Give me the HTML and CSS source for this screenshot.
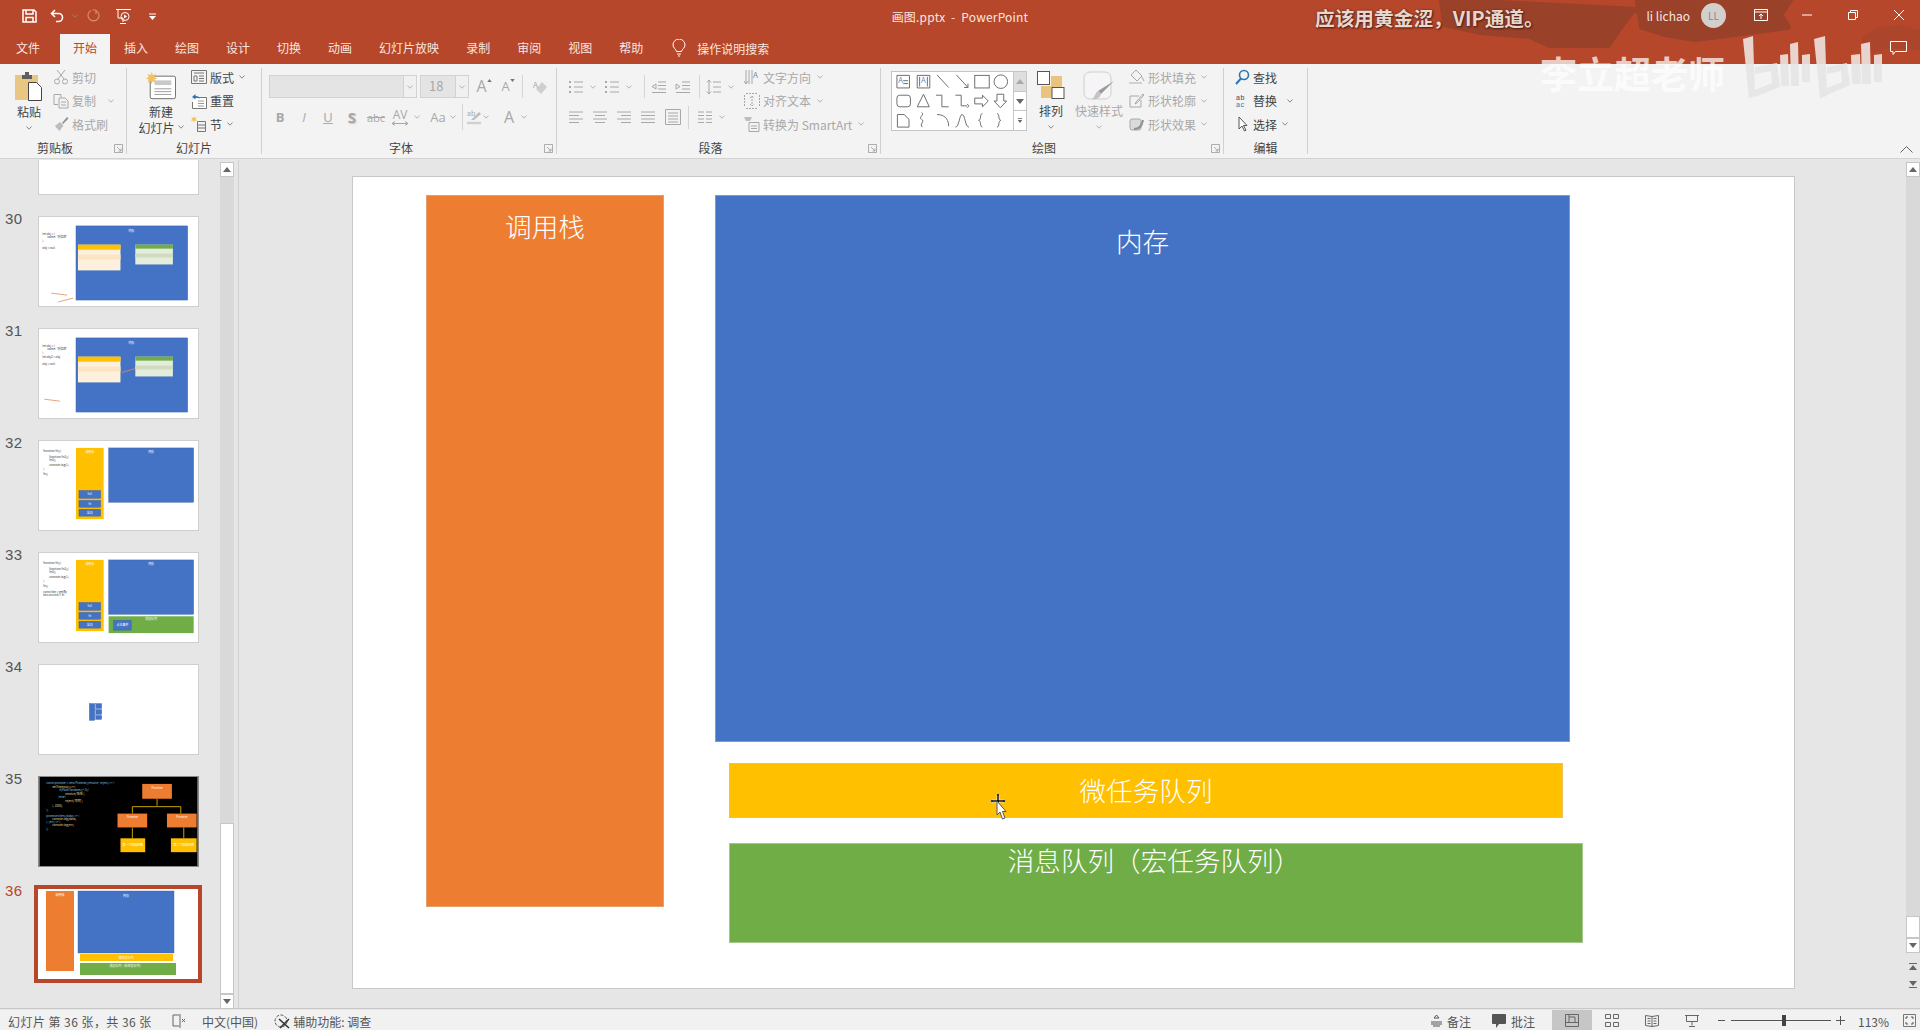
FILE: index.html
```html
<!DOCTYPE html>
<html lang="zh-CN">
  <head>
    <meta charset="UTF-8" />
    <title>画图.pptx - PowerPoint</title>
    <link rel="stylesheet" href="styles.css">
  </head>
  <body>
    <svg class="defs" aria-hidden="true">
      <symbol id="chev" viewBox="0 0 6 4"><path d="M.5.5 3 3.2 5.5.5" fill="none" stroke="currentColor"/></symbol>
      <symbol id="launch" viewBox="0 0 9 9"><path d="M.5 8.5V.5h8v8zM3 3l4 4M7 4.500V7H4.500" fill="none" stroke="currentColor" stroke-width=".8"/></symbol>
      <symbol id="bullets" viewBox="0 0 16 16"><path d="M6 3h9M6 8h9M6 13h9" stroke="currentColor" fill="none"/><path d="M1 2h2v2H1zM1 7h2v2H1zM1 12h2v2H1z" fill="currentColor"/></symbol>
      <symbol id="alignl" viewBox="0 0 16 16"><path d="M1 3h14M1 6.500h10M1 10h14M1 13.500h10" stroke="currentColor" fill="none"/></symbol>
      <symbol id="alignc" viewBox="0 0 16 16"><path d="M1 3h14M3 6.500h10M1 10h14M3 13.500h10" stroke="currentColor" fill="none"/></symbol>
      <symbol id="alignr" viewBox="0 0 16 16"><path d="M1 3h14M5 6.500h10M1 10h14M5 13.500h10" stroke="currentColor" fill="none"/></symbol>
      <symbol id="alignj" viewBox="0 0 16 16"><path d="M1 3h14M1 6.500h14M1 10h14M1 13.500h14" stroke="currentColor" fill="none"/></symbol>
    </svg>

    <!-- stuff burned into the recording, behind the window buttons -->
    <svg class="wm-blob" viewBox="0 0 500 64">
      <g class="wm-blob-dark">
        <path d="M22 0l3 24 35 8 50 4 20 9h58l10-15 15-20 4-0zM218 0l4 27 23 7 30 5 55-7 38-5-8-12 10-15z"/>
      </g>
      <path d="M442 38l14-10 24-3 20 5v20l-30-2-25 7z" class="wm-blob-soft"/>
    </svg>

    <header class="titlebar">
      <div class="qat">
        <svg class="qat-save" viewBox="0 0 15 14"><path d="M1 1h11l2 2v10H1zM4 1v4h7V1M4 13V8.500h7V13" fill="none" stroke="#fff" stroke-width="1.500"/></svg>
        <svg class="qat-undo" viewBox="0 0 15 14"><path d="M5 1 1.500 4.500 5 8M2 4.500h6.500a4 4 0 0 1 0 8H6" fill="none" stroke="#fff" stroke-width="1.600"/></svg>
        <svg class="chev qat-chev"><use href="#chev"/></svg>
        <svg class="qat-redo" viewBox="0 0 13 14"><path d="M4 1.500a5.500 5.500 0 1 0 5 0M9 1v4M9 1H5.500" fill="none" stroke="#d98a72" stroke-width="1.200"/></svg>
        <svg class="qat-show" viewBox="0 0 17 17"><path d="M1 1.500h15M3 1.500v8.500h5M8 10v4M5 15.500h6" fill="none" stroke="#fff"/><circle cx="10" cy="8.500" r="4" fill="none" stroke="#fff"/><path d="M9 6.500l3 2-3 2z" fill="#fff"/></svg>
        <svg class="qat-more" viewBox="0 0 7 7"><path d="M0 1h7" stroke="#fff"/><path d="M0 3h7L3.500 7z" fill="#fff"/></svg>
      </div>
      <div class="doc-title">画图.pptx &nbsp;-&nbsp; PowerPoint</div>
      <div class="win">
        <span class="user">li lichao</span>
        <span class="avatar">LL</span>
        <svg class="win-display" viewBox="0 0 14 12"><path d="M.5.500h13v11H.5zM.5 3h13M7 10V5M5 7l2-2 2 2" fill="none" stroke="#fff"/></svg>
        <svg class="win-min" viewBox="0 0 10 10"><path d="M0 5h10" stroke="#fff"/></svg>
        <svg class="win-max" viewBox="0 0 10 10"><path d="M.5 2.500h7v7h-7zM2.500 2.500v-2h7v7h-2" fill="none" stroke="#fff"/></svg>
        <svg class="win-close" viewBox="0 0 10 10"><path d="M0 0l10 10M10 0 0 10" stroke="#fff"/></svg>
      </div>
    </header>

    <nav class="tabs">
      <span class="tab tab-file">文件</span>
      <span class="tab tab-on">开始</span>
      <span class="tab">插入</span>
      <span class="tab">绘图</span>
      <span class="tab">设计</span>
      <span class="tab">切换</span>
      <span class="tab">动画</span>
      <span class="tab">幻灯片放映</span>
      <span class="tab">录制</span>
      <span class="tab">审阅</span>
      <span class="tab">视图</span>
      <span class="tab">帮助</span>
      <span class="tell">
        <svg class="bulb" viewBox="0 0 14 18"><path d="M4.500 12.500C4 10 1 9 1 6a6 6 0 0 1 12 0c0 3-3 4-3.500 6.500zM5 15h4M6 17h2" fill="none" stroke="#fff"/></svg>
        操作说明搜索
      </span>
      <svg class="comment" viewBox="0 0 17 15"><path d="M.5.500h16v10h-11l-2.500 3v-3H.5z" fill="none" stroke="#fff"/></svg>
    </nav>

    <section class="ribbon">
      <div class="group g-clip">
        <div class="group-body">
          <div class="big big-paste">
            <svg class="big-ic" viewBox="0 0 30 30"><path d="M1 4h23v25H1z" fill="#e9c684"/><path d="M8 4h3V1h4v3h3v4H8z" fill="#5f5f5f"/><path d="M14.500 11.500h8l5 5v13h-13z" fill="#fff" stroke="#444"/></svg>
            <span class="big-text">粘贴</span>
            <svg class="chev"><use href="#chev"/></svg>
          </div>
          <div class="rows off">
            <div class="row"><svg class="ic" viewBox="0 0 16 16"><path d="M4 1l7 9M12 1l-7 9" stroke="currentColor" fill="none"/><circle cx="4" cy="12.500" r="2.500" fill="none" stroke="currentColor"/><circle cx="12" cy="12.500" r="2.500" fill="none" stroke="currentColor"/></svg>剪切</div>
            <div class="row"><svg class="ic" viewBox="0 0 16 16"><path d="M1 1.500h7v3M1 1.500v10h4M6 5h6l3 3v7H6zM8 9h5M8 12h5" fill="none" stroke="currentColor"/></svg>复制<svg class="chev chev-far"><use href="#chev"/></svg></div>
            <div class="row"><svg class="ic" viewBox="0 0 16 16"><path d="M9 7 14 1l1.500 1.500L10 8z" fill="#8f8f8f"/><path d="M2 10l5-4 3.500 3.500-4 5.500C5 13 3 12 2 10z" fill="#bdbdbd"/></svg>格式刷</div>
          </div>
        </div>
        <div class="group-label">剪贴板<svg class="launch"><use href="#launch"/></svg></div>
      </div>

      <div class="group g-slide">
        <div class="group-body">
          <div class="big big-new">
            <svg class="big-ic" viewBox="0 0 32 30"><rect x="4.500" y="4.500" width="27" height="24" rx="2" fill="#fff" stroke="#666"/><path d="M9 9h18v5H9z" fill="#c9c9c9"/><path d="M9 18h18M9 21h18M9 24h18" stroke="#999"/><path d="M6 0l1.500 3.500L11 2 9 5.500l3 1.500-3 1 1.500 3.500L7 10l-1 3-1-3-3.500 1.500L3 8 0 7l3-1.500L1.500 2 5 3.500z" fill="#efc25c"/></svg>
            <span class="big-text">新建</span>
            <span class="big-text">幻灯片<svg class="chev"><use href="#chev"/></svg></span>
          </div>
          <div class="rows">
            <div class="row"><svg class="ic" viewBox="0 0 16 16"><path d="M.5 1.500h15v13H.5zM3 4h10M3 7h3v5H3zM8 7h5M8 9.500h5M8 12h5" fill="none" stroke="#777"/></svg>版式<svg class="chev"><use href="#chev"/></svg></div>
            <div class="row"><svg class="ic" viewBox="0 0 16 16"><path d="M4 4.500h11.500v11H1.500V9" fill="#fff" stroke="#777"/><path d="M7 8h6M7 10.500h6M7 13h6" stroke="#999"/><path d="M1 4 4.500 1v2c3 0 4 1 4 3-1-1-2-1.500-4-1.500v2z" fill="#2e75b6"/></svg>重置</div>
            <div class="row"><svg class="ic" viewBox="0 0 16 16"><path d="M6.500 5.500h8v10h-8zM6.500 9h8M6.500 12h8" fill="none" stroke="#777"/><path d="M3 0l.8 2L6 1.500 4.600 3.200 6 5l-2.200-.500L3 6.500l-.8-2L0 5l1.400-1.800L0 1.500l2.200.500z" fill="#efc25c"/></svg>节<svg class="chev"><use href="#chev"/></svg></div>
          </div>
        </div>
        <div class="group-label">幻灯片</div>
      </div>

      <div class="group g-font">
        <div class="group-body off">
          <div class="tool-row">
            <div class="combo combo-font"><span class="combo-fill"></span><span class="combo-btn"><svg class="chev"><use href="#chev"/></svg></span></div>
            <div class="combo combo-size"><span class="combo-val">18</span><span class="combo-btn"><svg class="chev"><use href="#chev"/></svg></span></div>
            <span class="cell cell-a">A<svg class="mini" viewBox="0 0 6 4"><path d="M3 0l3 4H0z"/></svg></span>
            <span class="cell cell-a2">A<svg class="mini" viewBox="0 0 6 4"><path d="M0 0h6L3 4z"/></svg></span>
            <span class="sep"></span>
            <svg class="ic" viewBox="0 0 16 16"><path d="M10 3l5 5-6 7-5-5z" fill="#cfcfcf"/><text x="1" y="9" class="ic-letter ic-letter-grey">A</text></svg>
          </div>
          <div class="tool-row">
            <span class="cell cell-b">B</span>
            <span class="cell cell-i">I</span>
            <span class="cell cell-u">U</span>
            <span class="cell cell-s">S</span>
            <span class="cell cell-abc">abc</span>
            <span class="cell cell-av"><span class="av-text">AV</span><svg class="av-arrow" viewBox="0 0 16 5"><path d="M0 2.500h16M3 .5 0 2.500l3 2M13 .5l3 2-3 2" fill="none" stroke="currentColor"/></svg></span>
            <svg class="chev"><use href="#chev"/></svg>
            <span class="cell cell-aa">Aa</span>
            <svg class="chev chev-tight"><use href="#chev"/></svg>
            <span class="sep sep-font"></span>
            <svg class="ic" viewBox="0 0 16 16"><path d="M5 11 13 3l2 2-7 6z" fill="#bdbdbd"/><text x="1" y="7" class="ic-hl-text">ab</text><path d="M1 14h14" stroke="#d0d0d0" stroke-width="2.500"/></svg>
            <svg class="chev chev-hl"><use href="#chev"/></svg>
            <span class="cell cell-color">A</span>
            <svg class="chev chev-tight"><use href="#chev"/></svg>
          </div>
        </div>
        <div class="group-label">字体<svg class="launch"><use href="#launch"/></svg></div>
      </div>

      <div class="group g-para">
        <div class="group-body off">
          <div class="para-left">
            <div class="tool-row">
              <svg class="ic"><use href="#bullets"/></svg>
              <svg class="chev chev-para"><use href="#chev"/></svg>
              <svg class="ic"><use href="#bullets"/></svg>
              <svg class="chev chev-para"><use href="#chev"/></svg>
              <span class="sep sep-p1"></span>
              <svg class="ic" viewBox="0 0 16 16"><path d="M7 3h8M7 6.500h8M7 10h8M1 13.500h14M5 5 1 7.500 5 10z" fill="none" stroke="currentColor"/></svg>
              <svg class="ic ic-ind2" viewBox="0 0 16 16"><path d="M7 3h8M7 6.500h8M7 10h8M1 13.500h14M1 5l4 2.500L1 10z" fill="none" stroke="currentColor"/></svg>
              <span class="sep sep-p2"></span>
              <svg class="ic" viewBox="0 0 16 16"><path d="M7 3h8M7 8h8M7 13h8M3 1v14M1 3.500 3 1l2 2.500M1 12.500 3 15l2-2.500" fill="none" stroke="currentColor"/></svg>
              <svg class="chev chev-para"><use href="#chev"/></svg>
            </div>
            <div class="tool-row">
              <svg class="ic"><use href="#alignl"/></svg>
              <svg class="ic ic-al"><use href="#alignc"/></svg>
              <svg class="ic ic-al"><use href="#alignr"/></svg>
              <svg class="ic ic-al"><use href="#alignj"/></svg>
              <svg class="ic ic-dist" viewBox="0 0 16 16"><path d="M.5.500h15v15H.5zM3 4h10M3 7h10M3 10h10M3 13h10" fill="none" stroke="currentColor"/></svg>
              <span class="sep sep-p3"></span>
              <svg class="ic" viewBox="0 0 16 16"><path d="M1 3h6M9 3h6M1 6.500h6M9 6.500h6M1 10h6M9 10h6M1 13.500h6M9 13.500h6" fill="none" stroke="currentColor"/></svg>
              <svg class="chev chev-para"><use href="#chev"/></svg>
            </div>
          </div>
          <div class="rows">
            <div class="row"><svg class="ic" viewBox="0 0 16 16"><path d="M2 1v14M5 1v14M8 1v14M0 12l2 3 2-3" fill="none" stroke="currentColor"/><text x="9" y="9" class="ic-letter">A</text></svg>文字方向<svg class="chev chev-r"><use href="#chev"/></svg></div>
            <div class="row"><svg class="ic" viewBox="0 0 16 16"><path d="M2 .5h12M2 15.500h12M.5 2v12M15.500 2v12M8 3v10M6 5l2-2 2 2M6 11l2 2 2-2" fill="none" stroke="currentColor" stroke-dasharray="2 1"/></svg>对齐文本<svg class="chev chev-r"><use href="#chev"/></svg></div>
            <div class="row"><svg class="ic" viewBox="0 0 16 16"><path d="M0 1h8l-2 4H2z" fill="#bdbdbd"/><path d="M5 6.500h10v9H5zM7 10h6M7 12.500h6" fill="none" stroke="currentColor"/></svg>转换为 SmartArt<svg class="chev chev-r"><use href="#chev"/></svg></div>
          </div>
        </div>
        <div class="group-label">段落<svg class="launch"><use href="#launch"/></svg></div>
      </div>

      <div class="group g-draw">
        <div class="group-body">
          <div class="gallery">
            <svg class="gallery-shapes" viewBox="0 0 122 60">
              <g fill="none" stroke="#6b6b6b">
                <path d="M3.500 3.500h13v13h-13zM10 9h5M10 12h5"/>
                <path d="M24.500 3.500h13v13h-13zM27 5v10M35 5v10"/>
                <path d="M45 3l12 13M65 3l12 13M77 16v-4M77 16h-4"/>
                <rect x="84" y="3.500" width="15" height="13"/>
                <circle cx="111" cy="10" r="7"/>
                <rect x="3.500" y="24" width="14" height="12" rx="3"/>
                <path d="M31 23l6 13H24.500zM44 24h6v12h7M64 24h6v11h6M76 33l2 2-2 2"/>
                <path d="M84 27h8v-3l6 6-6 6v-3h-8zM107 23h7v7h3l-6.500 7-6.500-7h3z"/>
                <path d="M4 44h7l5 5v8H4zM29 42c4 2-4 5 0 7s-3 5 1 8M45 44c6 0 12 3 12 12M64 57c4 0 4-13 7-13s3 13 7 13"/>
                <path d="M92 43c-3 0-1 7-4 7 3 0 1 7 4 7M107 43c3 0 1 7 4 7-3 0-1 7-4 7"/>
              </g>
              <text x="5" y="11" class="ic-letter">A</text>
              <text x="28.500" y="11" class="ic-letter">A</text>
            </svg>
            <div class="gallery-scroll">
              <span class="gs gs-up"><svg class="arrow-ic" viewBox="0 0 8 5"><path d="M4 0l4 5H0z"/></svg></span>
              <span class="gs"><svg class="arrow-ic" viewBox="0 0 8 5"><path d="M0 0h8L4 5z"/></svg></span>
              <span class="gs"><svg class="arrow-ic arrow-more" viewBox="0 0 8 9"><path d="M0 0h8v1.500H0zM0 3.500h8L4 9z"/></svg></span>
            </div>
          </div>
          <div class="big big-arrange">
            <svg class="big-ic" viewBox="0 0 28 28"><rect x="14" y="5" width="11" height="12" fill="#eac47f"/><rect x="4" y="15" width="11" height="12" fill="#eac47f"/><rect x=".5" y=".5" width="12" height="13" fill="#fff" stroke="#555"/><rect x="15" y="16.500" width="12" height="11" fill="#fff" stroke="#555"/></svg>
            <span class="big-text">排列</span>
            <svg class="chev"><use href="#chev"/></svg>
          </div>
          <div class="big big-quick off">
            <svg class="big-ic" viewBox="0 0 32 30"><rect x="1" y="1" width="27" height="27" rx="6" fill="#f6f4f6" stroke="#cfcfcf"/><path d="M31 10 18 23l-3-3z" fill="#9a9a9a"/><path d="M15 20l3 3c-1 4-5 6-9 5 3-2 3-6 6-8z" fill="#c4c4c4"/></svg>
            <span class="big-text">快速样式</span>
            <svg class="chev"><use href="#chev"/></svg>
          </div>
          <div class="rows off">
            <div class="row"><svg class="ic" viewBox="0 0 16 16"><path d="M7 1l6 6-5 5-6-6zM13 8l2 4" fill="none" stroke="currentColor"/><path d="M0 14h13" stroke="#d0d0d0" stroke-width="2"/></svg>形状填充<svg class="chev"><use href="#chev"/></svg></div>
            <div class="row"><svg class="ic" viewBox="0 0 16 16"><path d="M1 3h9M1 3v11h11V7M14 1 7 9l-1 2 2-1 7-8z" fill="none" stroke="currentColor"/></svg>形状轮廓<svg class="chev"><use href="#chev"/></svg></div>
            <div class="row"><svg class="ic" viewBox="0 0 16 16"><rect x="1" y="3" width="11" height="11" rx="2" fill="#dadada" stroke="currentColor"/><path d="M5 13c5 0 8-3 9-9" fill="none" stroke="#8f8f8f" stroke-width="2"/></svg>形状效果<svg class="chev"><use href="#chev"/></svg></div>
          </div>
        </div>
        <div class="group-label">绘图<svg class="launch"><use href="#launch"/></svg></div>
      </div>

      <div class="group g-edit">
        <div class="group-body">
          <div class="rows">
            <div class="row"><svg class="ic" viewBox="0 0 16 16"><circle cx="10" cy="6" r="4.500" fill="none" stroke="#2e75b6" stroke-width="1.600"/><path d="M7 9.500 2 15" stroke="#2e75b6" stroke-width="2"/></svg>查找</div>
            <div class="row"><svg class="ic" viewBox="0 0 16 16"><text x="2" y="6.500" class="ic-ab">ab</text><text x="2" y="14.400" class="ic-ab ic-ac">ac</text></svg>替换<svg class="chev chev-edit"><use href="#chev"/></svg></div>
            <div class="row"><svg class="ic" viewBox="0 0 16 16"><path d="M5 1v12l3-3 2.500 5 1.500-.8L9.500 9.500H13z" fill="#fff" stroke="#555"/></svg>选择<svg class="chev"><use href="#chev"/></svg></div>
          </div>
        </div>
        <div class="group-label">编辑</div>
      </div>

      <svg class="collapse" viewBox="0 0 13 7"><path d="M.5 6.500 6.500.5l6 6" fill="none" stroke="#666"/></svg>
    </section>

    <main class="main">
      <aside class="panel">
        <div class="thumb-list">
          <div class="thumb-row"><span class="num"></span><div class="thumb thumb-cut"></div></div>

          <div class="thumb-row">
            <span class="num">30</span>
            <div class="thumb">
              <svg class="thumb-art" viewBox="0 0 160 90">
                <text x="3" y="18" class="t-code">let obj = {</text><text x="8" y="21" class="t-code">name: '孙悟空'</text><text x="3" y="25" class="t-code">}</text><text x="3" y="32" class="t-code">obj = null</text>
                <rect x="37" y="9" width="113" height="75" class="f-blue"/><text x="93" y="15" class="t-small">内存</text>
                <rect x="39" y="28" width="43" height="26" class="f-cream"/><rect x="39" y="28" width="43" height="5" class="f-yellow"/><rect x="39" y="38" width="43" height="5" class="f-cream2"/>
                <rect x="97" y="28" width="38" height="20" class="f-pale"/><rect x="97" y="28" width="38" height="4" class="f-green"/><rect x="97" y="37" width="38" height="4" class="f-pale2"/>
                <path d="M12 77l16 2M19 86l15-4" class="s-arrow"/>
              </svg>
            </div>
          </div>

          <div class="thumb-row">
            <span class="num">31</span>
            <div class="thumb">
              <svg class="thumb-art" viewBox="0 0 160 90">
                <text x="3" y="18" class="t-code">let obj = {</text><text x="8" y="21" class="t-code">name: '孙悟空'</text><text x="3" y="25" class="t-code">}</text><text x="3" y="29" class="t-code">let obj2 = obj</text><text x="3" y="36" class="t-code">obj = null</text>
                <rect x="37" y="9" width="113" height="75" class="f-blue"/><text x="93" y="15" class="t-small">内存</text>
                <rect x="39" y="28" width="43" height="26" class="f-cream"/><rect x="39" y="28" width="43" height="5" class="f-yellow"/><rect x="39" y="38" width="43" height="5" class="f-cream2"/>
                <rect x="97" y="28" width="38" height="20" class="f-pale"/><rect x="97" y="28" width="38" height="4" class="f-green"/><rect x="97" y="37" width="38" height="4" class="f-pale2"/>
                <path d="M83 44l14-4M5 71l16 2" class="s-arrow"/>
              </svg>
            </div>
          </div>

          <div class="thumb-row">
            <span class="num">32</span>
            <div class="thumb">
              <svg class="thumb-art" viewBox="0 0 160 90">
                <text x="4" y="11" class="t-code">function fn(){</text><text x="10" y="17" class="t-code">function fn2(){</text><text x="10" y="20" class="t-code">fn3()</text><text x="10" y="25" class="t-code">console.log(1)</text><text x="4" y="29" class="t-code">}</text><text x="4" y="34" class="t-code">fn()</text>
                <rect x="37" y="7" width="28" height="72" class="f-yellow"/><text x="51" y="12" class="t-small">调用栈</text>
                <rect x="70" y="7" width="86" height="55" class="f-blue"/><text x="113" y="12" class="t-small">内存</text>
                <rect x="40" y="50" width="22" height="8" class="f-blue"/><rect x="40" y="60" width="22" height="7" class="f-blue"/><rect x="40" y="69" width="22" height="7" class="f-blue"/>
                <text x="51" y="55" class="t-small">fn2</text><text x="51" y="65" class="t-small">fn</text><text x="51" y="74" class="t-small">全局</text>
              </svg>
            </div>
          </div>

          <div class="thumb-row">
            <span class="num">33</span>
            <div class="thumb">
              <svg class="thumb-art" viewBox="0 0 160 90">
                <text x="4" y="11" class="t-code">function fn(){</text><text x="10" y="17" class="t-code">function fn2(){</text><text x="10" y="20" class="t-code">fn3()</text><text x="10" y="25" class="t-code">console.log(1)</text><text x="4" y="29" class="t-code">}</text><text x="4" y="34" class="t-code">fn()</text><text x="4" y="40" class="t-code">const btn = getBy</text><text x="4" y="43" class="t-code">btn.onclick = fn</text>
                <rect x="37" y="7" width="28" height="72" class="f-yellow"/><text x="51" y="12" class="t-small">调用栈</text>
                <rect x="70" y="7" width="86" height="55" class="f-blue"/><text x="113" y="12" class="t-small">内存</text>
                <rect x="40" y="50" width="22" height="8" class="f-blue"/><rect x="40" y="60" width="22" height="7" class="f-blue"/><rect x="40" y="69" width="22" height="7" class="f-blue"/>
                <text x="51" y="55" class="t-small">fn2</text><text x="51" y="65" class="t-small">fn</text><text x="51" y="74" class="t-small">全局</text>
                <rect x="70" y="64" width="86" height="17" class="f-green"/><text x="113" y="68" class="t-small">消息队列</text>
                <rect x="75" y="68" width="18" height="10" class="f-blue"/><text x="84" y="74" class="t-small">点击事件</text>
              </svg>
            </div>
          </div>

          <div class="thumb-row">
            <span class="num">34</span>
            <div class="thumb">
              <svg class="thumb-art" viewBox="0 0 160 90">
                <rect x="50.500" y="39" width="5.500" height="17" class="f-blue"/><rect x="57" y="39" width="6" height="5" class="f-blue"/><rect x="57" y="45" width="6" height="5" class="f-blue"/><rect x="57" y="51" width="6" height="4" class="f-blue"/>
              </svg>
            </div>
          </div>

          <div class="thumb-row">
            <span class="num">35</span>
            <div class="thumb thumb-dark">
              <svg class="thumb-art" viewBox="0 0 160 90">
                <rect width="160" height="90" fill="#000"/>
                <text x="7" y="7" class="t-dark">const promise = new Promise((resolve, reject) =&gt; {</text>
                <text x="13" y="11" class="t-dark2">setTimeout(()=&gt;{</text><text x="20" y="14" class="t-dark">if(Math.random()&gt;.5){</text><text x="26" y="18" class="t-dark2">resolve('哈哈')</text><text x="19" y="21" class="t-dark">}else{</text><text x="26" y="25" class="t-dark2">reject('呵呵')</text><text x="13" y="30" class="t-dark2">}, 1000)</text><text x="7" y="34" class="t-dark">})</text>
                <text x="7" y="40" class="t-dark">promise.then((data) =&gt; {</text><text x="13" y="43" class="t-dark2">console.log(data)</text><text x="7" y="47" class="t-dark">}, (err) =&gt; {</text><text x="13" y="50" class="t-dark2">console.log(err)</text><text x="7" y="54" class="t-dark">})</text>
                <path d="M119 22v7M94 37v-7h49v7M94 51v11M146 51v11" class="s-tree"/>
                <rect x="104" y="7" width="30" height="15" class="f-orange"/><rect x="79" y="37" width="30" height="14" class="f-orange"/><rect x="129" y="37" width="30" height="14" class="f-orange"/>
                <rect x="82" y="62" width="25" height="14" class="f-yellow"/><rect x="133" y="62" width="26" height="14" class="f-yellow"/>
                <text x="119" y="12" class="t-small">Promise</text><text x="94" y="41" class="t-small">Promise</text><text x="144" y="41" class="t-small">Promise</text>
                <text x="94.500" y="70" class="t-small">第一个回调函数</text><text x="146" y="70" class="t-small">第二个回调函数</text>
              </svg>
            </div>
          </div>

          <div class="thumb-row">
            <span class="num num-on">36</span>
            <div class="thumb thumb-on">
              <svg class="thumb-art" viewBox="0 0 160 90">
                <rect x="8" y="2" width="28" height="80" class="f-orange"/><text x="22" y="7" class="t-small">调用栈</text>
                <rect x="40" y="2" width="96" height="62" class="f-blue"/><text x="88" y="8" class="t-small">内存</text>
                <rect x="42" y="65" width="93" height="7" class="f-yellow"/><text x="88" y="70" class="t-small">微任务队列</text>
                <rect x="42" y="74" width="96" height="12" class="f-green"/><text x="88" y="78" class="t-small">消息队列（宏任务队列）</text>
              </svg>
            </div>
          </div>
        </div>

        <div class="vbar vbar-left">
          <span class="vbtn"><svg class="arrow-ic" viewBox="0 0 8 5"><path d="M4 0l4 5H0z"/></svg></span>
          <span class="vtrack vtrack-left"></span>
          <span class="vthumb vthumb-left"></span>
          <span class="vbtn"><svg class="arrow-ic" viewBox="0 0 8 5"><path d="M0 0h8L4 5z"/></svg></span>
        </div>
      </aside>

      <div class="stage">
        <div class="slide">
          <div class="shape shape-stack">调用栈</div>
          <div class="shape shape-heap">内存</div>
          <div class="shape shape-micro">微任务队列</div>
          <div class="shape shape-macro">消息队列（宏任务队列）</div>
          <svg class="pointer" viewBox="0 0 17 28">
            <path d="M8 1l2 2.500H9V8h4.500V7L16 9l-2.500 2v-1H9v4.500h1L8 17l-2-2.500h1V10H2.500v1L0 9l2.500-2v1H7V3.500H6z" fill="#111" stroke="#fff" stroke-width=".5"/>
            <path d="M7 9v14l3-3 2.500 7 2.500-1-2.500-6.500H16z" fill="#fff" stroke="#555"/>
          </svg>
        </div>
        <div class="vbar vbar-right">
          <span class="vbtn"><svg class="arrow-ic" viewBox="0 0 8 5"><path d="M4 0l4 5H0z"/></svg></span>
          <span class="vtrack vtrack-right"></span>
          <span class="vthumb vthumb-right"></span>
          <span class="vbtn"><svg class="arrow-ic" viewBox="0 0 8 5"><path d="M0 0h8L4 5z"/></svg></span>
          <svg class="page-ic page-prev" viewBox="0 0 8 9"><path d="M0 1h8v1H0zM4 3l4 5H0z"/></svg>
          <svg class="page-ic page-next" viewBox="0 0 8 9"><path d="M0 8h8V7H0zM4 6 8 1H0z"/></svg>
        </div>
      </div>
    </main>

    <footer class="statusbar">
      <div class="st-left">
        <span class="st-count">幻灯片 第 36 张，共 36 张</span>
        <svg class="st-spell" viewBox="0 0 14 14"><path d="M7 1H1v11h6M8 0v14M10 5l3 3M13 5l-3 3" fill="none" stroke="#666"/></svg>
        <span class="st-lang">中文(中国)</span>
        <svg class="st-a11y" viewBox="0 0 16 15"><circle cx="7" cy="7" r="6" fill="none" stroke="#555" stroke-dasharray="3 1.500"/><path d="M5 5l10 9M15 5 6 14" stroke="#333" stroke-width="1.600"/></svg>
        <span>辅助功能: 调查</span>
      </div>
      <div class="st-right">
        <svg class="st-notes" viewBox="0 0 11 12"><path d="M0 7h11M0 9h11M2 11h7M5.500 0 3 3h5z" stroke="#555" fill="none"/></svg>
        <span class="st-label">备注</span>
        <svg class="st-comment" viewBox="0 0 14 14"><path d="M1 0h12a1 1 0 0 1 1 1v8a1 1 0 0 1-1 1H7l-3 4v-4H1a1 1 0 0 1-1-1V1a1 1 0 0 1 1-1z" fill="#555"/></svg>
        <span class="st-label st-label-last">批注</span>
        <span class="view view-on"><svg class="view-ic" viewBox="0 0 14 13"><path d="M.5.500h13v12H.5zM4 .5v8M4 3h6v5.500M.5 8.500h13" fill="none" stroke="#666"/></svg></span>
        <span class="view"><svg class="view-ic" viewBox="0 0 14 13"><path d="M.5.500h5v4h-5zM8.500.5h5v4h-5zM.5 8.500h5v4h-5zM8.500 8.500h5v4h-5z" fill="none" stroke="#666"/></svg></span>
        <span class="view"><svg class="view-ic" viewBox="0 0 14 13"><path d="M.5 1.500 7 2.500l6.500-1v10L7 12.500l-6.500-1zM7 2.500v10M2.500 4.500h3M2.500 7h3M2.500 9.500h3M8.500 4.500h3M8.500 7h3M8.500 9.500h3" fill="none" stroke="#666"/></svg></span>
        <span class="view"><svg class="view-ic" viewBox="0 0 14 13"><path d="M0 1.500h14M1.500 1.500v6h11v-6M7 7.500v4M4 12.500h6" fill="none" stroke="#666"/></svg></span>
        <span class="zoom-minus"></span>
        <span class="slider"><span class="slider-knob"></span></span>
        <svg class="zoom-plus" viewBox="0 0 9 9"><path d="M4.500 0v9M0 4.500h9" stroke="#555"/></svg>
        <span class="st-zoom">113%</span>
        <svg class="st-fit" viewBox="0 0 13 13"><path d="M.5.500h12v12H.5z" fill="none" stroke="#777"/><path d="M3 5V3h2M10 5V3H8M3 8v2h2M10 8v2H8" fill="none" stroke="#555"/></svg>
      </div>
    </footer>

    <div class="wm-line">应该用黄金涩，VIP通道。</div>
    <div class="wm-name">李立超老师</div>
    <svg class="wm-logo" viewBox="0 0 140 62">
      <defs>
        <linearGradient id="wm-fade" gradientUnits="userSpaceOnUse" x1="0" y1="0" x2="0" y2="62">
          <stop offset=".45" stop-color="#f2ecea" stop-opacity=".85"/>
          <stop offset=".45" stop-color="#dcdcdc" stop-opacity=".55"/>
        </linearGradient>
      </defs>
      <g fill="url(#wm-fade)">
        <path d="M0 3l10-3 2 60-6 2z"/>
        <path d="M12 31l22-4 3 24-25 10v-7l17-7-1-12-16 3z"/>
        <path d="M37 19l8-1 1 32h-8zM47 8l8-2 1 44h-8zM59 19l8-1v28h-8z"/>
        <path d="M71 3l11-3 2 60-7 2z"/>
        <path d="M84 31l20-4 3 22-23 10v-7l15-6-1-11-14 3z"/>
        <path d="M108 19l9-1 1 30h-9zM118 8l9-2 1 42h-9zM131 19l8-1v28h-8z"/>
      </g>
    </svg>
  </body>
</html>
```

FILE: styles.css
```css
* {
  box-sizing: border-box;
}
html,
body {
  margin: 0;
  height: 100%;
}
body {
  position: relative;
  height: 1030px;
  overflow: hidden;
  background: #e6e6e6;
  font-family: "Noto Sans CJK SC", "Noto Sans", sans-serif;
  font-size: 12px;
  color: #444;
}
svg {
  flex: none;
  display: block;
}
.defs {
  width: 0;
  height: 0;
  position: absolute;
}

/* title bar */
.titlebar {
  height: 34px;
  background: #b7472a;
  color: #f7e6e0;
  display: grid;
  grid-template-columns: 1fr auto 1fr;
  align-items: center;
}
.qat {
  display: flex;
  align-items: center;
  padding: 0 0 2px 22px;
  position: relative;
  z-index: 2;
}
.qat-save {
  width: 15px;
  height: 14px;
}
.qat-undo {
  width: 15px;
  height: 14px;
  margin-left: 13px;
}
.qat-chev {
  margin-left: 7px;
  color: #f3d5cb;
}
.qat-redo {
  width: 13px;
  height: 14px;
  margin-left: 9px;
}
.qat-show {
  width: 17px;
  height: 17px;
  margin-left: 15px;
}
.qat-more {
  width: 7px;
  height: 7px;
  margin-left: 17px;
}
.doc-title {
  line-height: 34px;
  font-size: 12px;
  letter-spacing: .2px;
  position: relative;
  z-index: 2;
}
.win {
  display: flex;
  align-items: center;
  justify-content: flex-end;
  padding-bottom: 4px;
  position: relative;
  z-index: 2;
}
.user {
  margin-right: 11px;
}
.avatar {
  width: 25px;
  height: 25px;
  border-radius: 50%;
  background: #d3cfcd;
  color: #8a8a8a;
  font-size: 10px;
  line-height: 25px;
  text-align: center;
}
.win-display {
  width: 14px;
  height: 12px;
  margin-left: 28px;
}
.win-min {
  width: 10px;
  height: 10px;
  margin-left: 34px;
}
.win-max {
  width: 10px;
  height: 10px;
  margin-left: 36px;
}
.win-close {
  width: 10px;
  height: 10px;
  margin: 0 16px 0 36px;
}

/* tabs */
.tabs {
  height: 30px;
  background: #b7472a;
  color: #f7e6e0;
  display: flex;
  align-items: stretch;
  padding-left: 3px;
  position: relative;
}
.tab {
  padding: 0 13px;
  margin-right: 1px;
  line-height: 28px;
}
.tab-file {
  margin-right: 7px;
}
.tab-on {
  background: #f3f3f3;
  color: #b7472a;
}
.tell {
  display: flex;
  align-items: center;
  gap: 11px;
  margin-left: 15px;
  margin-top: -2px;
}
.bulb {
  width: 14px;
  height: 18px;
}
.comment {
  width: 17px;
  height: 15px;
  margin: 7px 13px 0 auto;
  position: relative;
  z-index: 2;
}

/* ribbon */
.ribbon {
  height: 95px;
  background: #f3f3f3;
  border-bottom: 1px solid #d2d2d2;
  display: flex;
  padding-top: 4px;
  color: #444;
}
.group {
  height: 86px;
  border-right: 1px solid #d0d0d0;
  display: flex;
  flex-direction: column;
  flex: none;
}
.g-clip {
  width: 127px;
}
.g-slide {
  width: 135px;
}
.g-font {
  width: 295px;
}
.g-para {
  width: 324px;
}
.g-draw {
  width: 343px;
}
.g-edit {
  width: 84px;
}
.group-body {
  height: 70px;
  display: flex;
}
.group-label {
  height: 16px;
  line-height: 20px;
  text-align: center;
  position: relative;
  color: #444;
  padding-right: 16px;
}
.g-slide .group-label,
.g-edit .group-label {
  padding-right: 0;
}
.launch {
  position: absolute;
  right: 3px;
  top: 6px;
  width: 9px;
  height: 9px;
  color: #9a9a9a;
}
.off {
  color: #a8a8a8;
}
.big {
  display: flex;
  flex-direction: column;
  align-items: center;
  padding-top: 3px;
  line-height: 15.500px;
}
.big-ic {
  width: 30px;
  height: 30px;
  margin-bottom: 3px;
}
.big .chev {
  margin-top: 6px;
}
.big-text {
  display: flex;
  align-items: center;
  white-space: nowrap;
  gap: 3px;
}
.big-text .chev {
  margin-top: 0;
}
.big-paste {
  width: 40px;
  margin: 0 4px 0 9px;
}
.big-new {
  width: 56px;
  margin: 0 2px 0 6px;
}
.rows {
  display: flex;
  flex-direction: column;
  gap: 3.500px;
  margin-top: -1px;
}
.row {
  height: 20px;
  display: flex;
  align-items: center;
  white-space: nowrap;
  gap: 3px;
}
.ic {
  width: 16px;
  height: 16px;
}
.chev {
  width: 6px;
  height: 4px;
  color: #888;
}
.off .chev {
  color: #b5b5b5;
}
.row .chev {
  margin-left: 2px;
}
.row .chev-far {
  margin-left: 9px;
}
.row .chev-r {
  margin-left: 3px;
}
.row .chev-edit {
  margin-left: 7px;
}
.ic-letter {
  font-size: 8px;
  fill: #5b8bc4;
}
.ic-letter-grey {
  fill: #a8a8a8;
}
.ic-hl-text {
  font-size: 7px;
  fill: #a8a8a8;
}
.ic-ab {
  font-family: "Liberation Sans", sans-serif;
  font-size: 7px;
  letter-spacing: .5px;
  fill: #444;
}
.ic-ac {
  fill: #2e75b6;
}

/* font and paragraph tools */
.g-font .group-body {
  flex-direction: column;
  padding: 7px 0 0 6px;
  gap: 7.500px;
}
.tool-row {
  height: 23px;
  display: flex;
  align-items: center;
}
.combo {
  height: 23px;
  display: flex;
  border: 1px solid #d2d2d2;
  background: #e4e4e4;
}
.combo-font {
  width: 148px;
  margin-left: 1px;
}
.combo-size {
  width: 49px;
  margin: 0 3px;
}
.combo-fill {
  flex: 1;
}
.combo-val {
  flex: 1;
  padding-left: 8px;
  line-height: 20px;
  font-size: 13px;
}
.combo-btn {
  width: 13px;
  background: #f0f0f0;
  border-left: 1px solid #d2d2d2;
  display: flex;
  align-items: center;
  justify-content: center;
}
.cell {
  width: 24px;
  flex: none;
  display: flex;
  justify-content: center;
  font-family: "Open Sans", sans-serif;
  font-size: 13px;
  line-height: 23px;
}
.cell-a {
  font-size: 16px;
}
.cell-a2 {
  font-size: 13px;
}
.mini {
  width: 5px;
  height: 3px;
  margin-top: 4px;
  fill: #777;
}
.cell-b {
  font-weight: 700;
}
.cell-i {
  font-style: italic;
}
.cell-u {
  text-decoration: underline;
}
.cell-s {
  font-weight: 700;
  font-size: 15px;
  text-shadow: 1px 1px 1px #c8c8c8;
}
.cell-abc {
  text-decoration: line-through;
  font-size: 11px;
}
.cell-av {
  flex-direction: column;
  align-items: center;
  font-size: 12px;
}
.av-text {
  line-height: 13px;
}
.av-arrow {
  width: 16px;
  height: 5px;
}
.cell-color {
  margin-left: 4px;
  font-size: 16px;
}
.g-font .cell-aa {
  margin-left: 4px;
}
.g-font .tool-row .chev {
  margin: 0 2px;
}
.g-font .tool-row .chev-tight {
  margin: 0 2px 0 0;
}
.g-font .tool-row .chev-hl {
  margin: 0 4px 0 1px;
}
.g-font .combo .chev {
  margin: 0;
}
.sep {
  width: 1px;
  height: 23px;
  background: #d6d6d6;
  flex: none;
  margin: 0 9px 0 2px;
}
.sep-font {
  margin: 0 3px 0 4px;
  height: 26px;
}
.g-para .group-body {
  padding-left: 11px;
}
.para-left {
  width: 176px;
  padding-top: 7px;
  display: flex;
  flex-direction: column;
  gap: 7.500px;
}
.chev-para {
  margin: 0 8px 0 6px;
}
.sep-p1 {
  margin: 0 6px 0 4px;
}
.ic-ind2 {
  margin-left: 8px;
}
.sep-p2 {
  margin: 0 6px 0 8px;
}
.ic-al {
  margin-left: 8px;
}
.ic-dist {
  margin-left: 9px;
}
.sep-p3 {
  margin: 0 8px 0 7px;
}

/* shapes gallery */
.g-draw .group-body {
  padding: 3px 0 0 10px;
}
.g-draw .rows {
  margin-top: -4px;
}
.gallery {
  width: 136px;
  height: 60px;
  display: flex;
  background: #fff;
  border: 1px solid #c6c6c6;
  margin-right: 4px;
}
.gallery-shapes {
  width: 121px;
  height: 58px;
}
.gallery-scroll {
  flex: 1;
  display: flex;
  flex-direction: column;
  border-left: 1px solid #c6c6c6;
}
.gs {
  flex: 1;
  display: flex;
  align-items: center;
  justify-content: center;
  border-bottom: 1px solid #c6c6c6;
}
.gs:last-child {
  border-bottom: 0;
}
.gs-up {
  background: #dedede;
}
.gs-up .arrow-ic {
  fill: #aaa;
}
.arrow-more {
  height: 9px;
}
.g-draw .big {
  padding-top: 0;
}
.big-arrange {
  width: 40px;
  margin-right: 2px;
}
.big-arrange .big-ic {
  width: 28px;
  height: 28px;
  margin-bottom: 4px;
}
.big-quick {
  width: 52px;
  margin-right: 4px;
}
.big-quick .big-ic {
  width: 32px;
  margin-bottom: 2px;
}
.g-edit .group-body {
  padding-left: 10px;
}
.collapse {
  width: 13px;
  height: 7px;
  margin: 78px 7px 0 auto;
}

/* main area */
.main {
  display: flex;
  height: 849px;
  margin-top: 1px;
  border-bottom: 1px solid #c8c8c8;
}
.panel {
  width: 239px;
  flex: none;
  display: flex;
  border-right: 1px solid #cfcfcf;
  padding-right: 4px;
}
.thumb-list {
  width: 220px;
  display: flex;
  flex-direction: column;
  gap: 21px;
  overflow: hidden;
  padding-top: 0;
}
.thumb-row {
  display: flex;
  flex: none;
}
.num {
  width: 38px;
  padding: 0 0 0 5px;
  font-family: "Liberation Sans", sans-serif;
  font-size: 15px;
  line-height: 18px;
  color: #555;
  margin-top: -6px;
  letter-spacing: .5px;
}
.num-on {
  color: #b7472a;
  margin-top: -6px;
}
.thumb {
  width: 161px;
  height: 91px;
  background: #fff;
  border: 1px solid #cfcfcf;
}
.thumb-cut {
  height: 35px;
  border-top: 0;
}
.thumb-dark {
  border-color: #8a8a8a;
}
.thumb-on {
  outline: 4px solid #b7472a;
  border: 0;
  width: 160px;
  height: 90px;
  margin-top: 1px;
}
.thumb-art {
  width: 100%;
  height: 100%;
}
.f-blue {
  fill: #4472c4;
  stroke: #3a62aa;
  stroke-width: .4;
}
.f-yellow {
  fill: #ffc000;
}
.f-orange {
  fill: #ed7d31;
}
.f-green {
  fill: #70ad47;
}
.f-cream {
  fill: #fdf0dc;
}
.f-cream2 {
  fill: #fbe3c4;
}
.f-pale {
  fill: #e4ecdc;
}
.f-pale2 {
  fill: #cfdcc0;
}
.t-code {
  font-size: 3px;
  fill: #333;
}
.t-small {
  font-size: 3px;
  fill: #fff;
  text-anchor: middle;
}
.t-dark {
  font-size: 3px;
  fill: #7fc4ef;
}
.t-dark2 {
  font-size: 3px;
  fill: #e7dd9a;
}
.s-arrow {
  stroke: #e28a5a;
  stroke-width: .8;
  fill: none;
}
.s-tree {
  stroke: #c9a100;
  stroke-width: 1;
  fill: none;
}

/* scrollbars */
.vbar {
  width: 14px;
  flex: none;
  display: flex;
  flex-direction: column;
  padding-top: 2px;
}
.vbtn {
  height: 15px;
  flex: none;
  background: #fff;
  border: 1px solid #c6c6c6;
  display: flex;
  align-items: center;
  justify-content: center;
}
.arrow-ic {
  width: 8px;
  height: 5px;
  fill: #666;
}
.vtrack {
  background: #d9d9d9;
  flex: none;
}
.vthumb {
  background: #fff;
  border: 1px solid #c6c6c6;
  flex: none;
}
.vtrack-left {
  height: 646px;
}
.vthumb-left {
  height: 171px;
}
.vtrack-right {
  height: 739px;
}
.vthumb-right {
  height: 22px;
}
.page-ic {
  width: 8px;
  height: 9px;
  fill: #666;
  margin: 9px 0 0 3px;
}
.stage {
  flex: 1;
  display: flex;
  align-items: flex-start;
  justify-content: space-between;
}

/* the slide itself: free canvas */
.slide {
  position: relative;
  width: 1443px;
  height: 813px;
  margin: 16px 0 0 113px;
  background: #fff;
  border: 1px solid #c8c8c8;
}
.shape {
  position: absolute;
  color: #fff;
  font-size: 26.600px;
  font-weight: 300;
  line-height: 36px;
  text-align: center;
}
.shape-stack {
  left: 73px;
  top: 18px;
  width: 238px;
  height: 712px;
  padding-top: 12px;
  background: #ed7d31;
  border: 1px solid #e3a06e;
}
.shape-heap {
  left: 362px;
  top: 18px;
  width: 855px;
  height: 547px;
  padding-top: 27px;
  background: #4472c4;
  border: 1px solid #7d9ad0;
}
.shape-micro {
  left: 376px;
  top: 586px;
  width: 834px;
  height: 55px;
  padding-top: 8px;
  background: #ffc000;
  border: 1px solid #eec05a;
}
.shape-macro {
  left: 376px;
  top: 666px;
  width: 854px;
  height: 100px;
  padding-right: 4px;
  line-height: 32px;
  background: #70ad47;
  border: 1px solid #a5c68c;
}
.pointer {
  position: absolute;
  left: 637px;
  top: 615px;
  width: 17px;
  height: 28px;
}

/* status bar */
.statusbar {
  height: 21px;
  background: #f1f1f1;
  display: flex;
  justify-content: space-between;
  align-items: stretch;
  color: #555;
  margin-top: 1px;
}
.st-left,
.st-right {
  display: flex;
  align-items: center;
}
.st-left {
  padding: 1px 0 0 8px;
}
.st-count {
  width: 144px;
  white-space: nowrap;
  letter-spacing: .45px;
}
.st-spell {
  width: 14px;
  height: 14px;
  margin: 0 16px 0 20px;
}
.st-lang {
  margin-right: 16px;
}
.st-a11y {
  width: 16px;
  height: 15px;
  margin-right: 3px;
}
.st-notes {
  width: 11px;
  height: 12px;
  margin-right: 5px;
}
.st-label {
  padding-top: 1px;
}
.st-comment {
  width: 14px;
  height: 14px;
  margin: 0 5px 0 21px;
}
.st-label-last {
  margin-right: 17px;
}
.view {
  width: 40px;
  height: 100%;
  display: flex;
  align-items: center;
  justify-content: center;
}
.view-on {
  background: #c6c6c6;
}
.view-ic {
  width: 14px;
  height: 13px;
}
.zoom-minus {
  width: 7px;
  height: 1px;
  background: #555;
  margin: 0 6px;
}
.slider {
  width: 100px;
  height: 1px;
  background: #555;
  position: relative;
}
.slider-knob {
  position: absolute;
  left: 51px;
  top: -5px;
  width: 4px;
  height: 11px;
  background: #444;
}
.zoom-plus {
  width: 9px;
  height: 9px;
  margin-left: 5px;
}
.st-zoom {
  margin-left: 13px;
  width: 32px;
  white-space: nowrap;
  padding-top: 1px;
}
.st-fit {
  width: 13px;
  height: 13px;
  margin: 0 4px 0 13px;
}

/* video overlay */
.wm-blob {
  position: absolute;
  left: 1420px;
  top: 0;
  width: 500px;
  height: 64px;
  z-index: 1;
}
.wm-blob-dark {
  fill: #9a412a;
  stroke: #9a412a;
  stroke-width: 6;
  stroke-linejoin: round;
}
.wm-blob-soft {
  fill: #ab452b;
}
.wm-line {
  position: absolute;
  left: 1315px;
  top: 4px;
  z-index: 2;
  font-size: 19.700px;
  line-height: 28px;
  font-weight: 700;
  color: #e9d6cc;
  text-shadow: 1px 1px 2px #4a2015, 0 0 2px #5a2a1a;
  white-space: nowrap;
}
.wm-name {
  position: absolute;
  left: 1540px;
  top: 48px;
  z-index: 2;
  font-size: 37px;
  line-height: 50px;
  font-weight: 700;
  color: rgba(255, 255, 255, .72);
  white-space: nowrap;
}
.wm-logo {
  position: absolute;
  left: 1743px;
  top: 36px;
  z-index: 2;
  width: 140px;
  height: 62px;
}
```
